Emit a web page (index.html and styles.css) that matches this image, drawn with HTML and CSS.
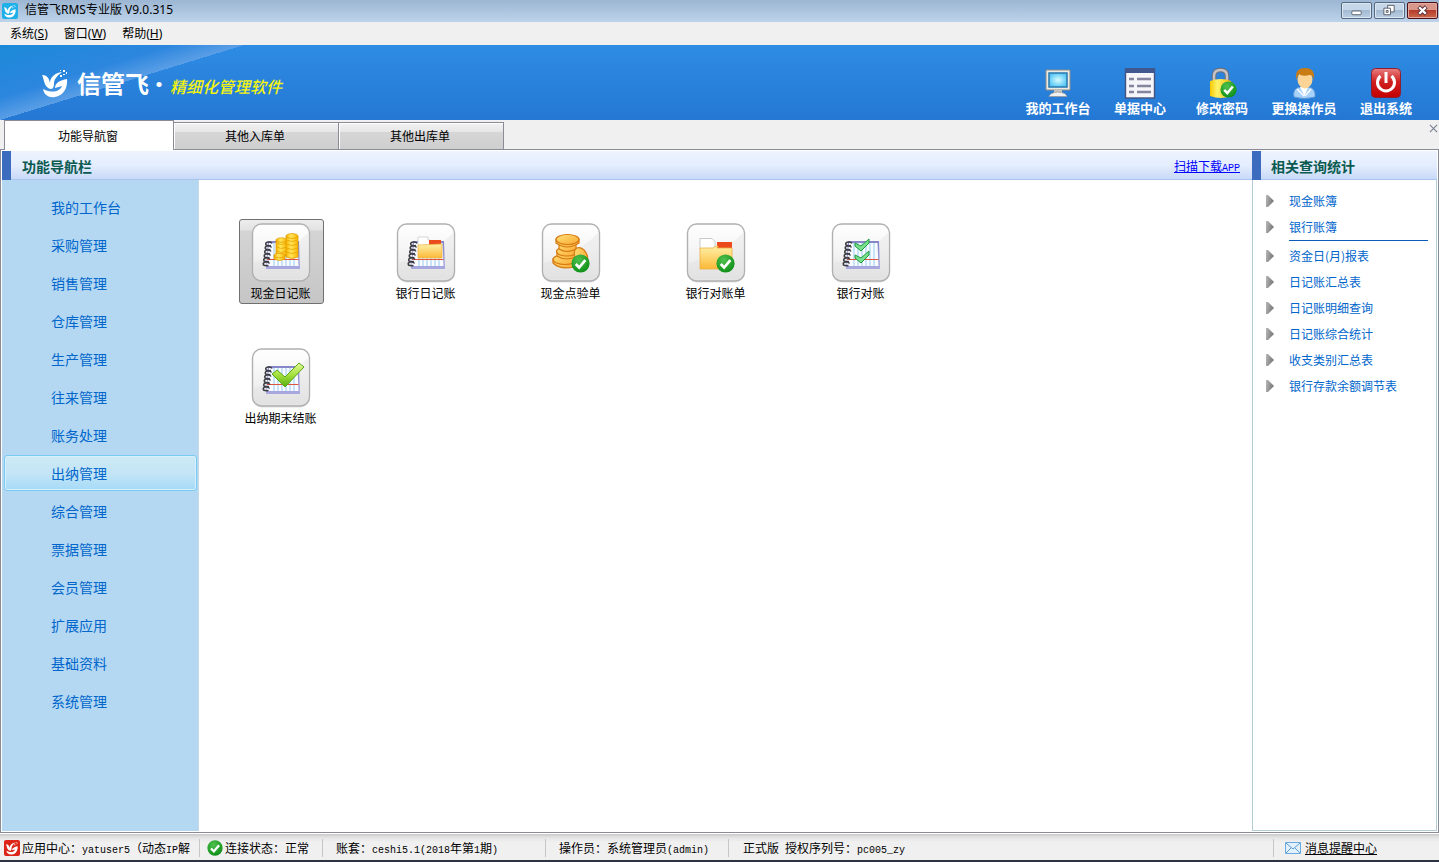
FILE: index.html
```html
<!DOCTYPE html>
<html lang="zh-CN">
<head>
<meta charset="utf-8">
<title>信管飞RMS专业版</title>
<link rel="stylesheet" href="styles.css">
</head>
<body>
<svg class="defs" width="0" height="0" aria-hidden="true">
  <defs>
    <linearGradient id="gTile" x1="0" y1="0" x2="0" y2="1"><stop offset="0" stop-color="#fff"/><stop offset=".45" stop-color="#f5f5f5"/><stop offset="1" stop-color="#e4e4e4"/></linearGradient>
    <linearGradient id="gBook" x1="0" y1="0" x2="0" y2="1"><stop offset="0" stop-color="#8585c8"/><stop offset="1" stop-color="#a9a9e0"/></linearGradient>
    <linearGradient id="gCoin" x1="0" y1="0" x2="1" y2="0"><stop offset="0" stop-color="#f8b400"/><stop offset=".4" stop-color="#ffe55a"/><stop offset="1" stop-color="#f9b600"/></linearGradient>
    <linearGradient id="gFolder" x1="0" y1="0" x2="0" y2="1"><stop offset="0" stop-color="#fff0a8"/><stop offset="1" stop-color="#fbb938"/></linearGradient>
    <linearGradient id="gCheck" x1="0" y1="0" x2="0" y2="1"><stop offset="0" stop-color="#e6fa9a"/><stop offset=".5" stop-color="#a4e03c"/><stop offset="1" stop-color="#55ad10"/></linearGradient>
    <linearGradient id="gOrange" x1="0" y1="0" x2="1" y2="1"><stop offset="0" stop-color="#ffe07a"/><stop offset="1" stop-color="#f9a830"/></linearGradient>
    <linearGradient id="gRed" x1="0" y1="0" x2="0" y2="1"><stop offset="0" stop-color="#e88080"/><stop offset=".45" stop-color="#d02020"/><stop offset="1" stop-color="#c40000"/></linearGradient>
    <linearGradient id="gLock" x1="0" y1="0" x2="1" y2="0"><stop offset="0" stop-color="#f5c800"/><stop offset=".35" stop-color="#fff36a"/><stop offset="1" stop-color="#f0b800"/></linearGradient>
    <radialGradient id="gGreen" cx=".4" cy=".3" r=".8"><stop offset="0" stop-color="#4fc04f"/><stop offset="1" stop-color="#078a10"/></radialGradient>
    <radialGradient id="gScreen"><stop offset="0" stop-color="#d8fbff"/><stop offset="1" stop-color="#5ccaf6"/></radialGradient>
    <symbol id="bird" viewBox="0 0 30 30">
      <path d="M2 7C7 7 9 10 10 15C10 9 15 5 22 4C17 8 14 11 14 16C14 22 10 22 7 19C4 16 4 11 2 7Z"/>
      <path d="M27 11C20 12 15 15 15 20L22 18C20 23 13 26 3 21C4 27 9 30 15 29C23 28 28 20 27 11Z"/>
      <path d="M20 7h2v2h-2zM23 2h2v2h-2zM23 6h2v1h-2zM26 4h1v2h-1zM20 2h1v1h-1z"/>
    </symbol>
    <symbol id="badge" viewBox="0 0 18 18">
      <circle cx="9" cy="9" r="8.600" fill="url(#gGreen)"/>
      <path d="M4.500 9.500L7.700 12.800L13.600 5.800" fill="none" stroke="#fff" stroke-width="2.600"/>
    </symbol>
    <symbol id="tile" viewBox="0 0 60 60">
      <rect x="1.500" y="2.500" width="57" height="57" rx="9" fill="#ccc" opacity=".6"/>
      <rect x="1.500" y="1" width="57" height="57" rx="9" fill="url(#gTile)" stroke="#b0b0b0" stroke-width="1.400"/>
      <path d="M3 40Q35 32 57 10V49Q57 56 50 56H10Q3 56 3 49Z" fill="#dcdcdc" opacity=".3"/>
    </symbol>
    <symbol id="book" viewBox="0 0 60 60">
      <path d="M17 18H48L49 46H15Z" fill="url(#gBook)"/>
      <path d="M18 20H46.500L47.500 43H16Z" fill="#f8fbff"/>
      <path d="M23 20V43M27 20V43M31 20V43M35 20V43M39 20V43M43 20V43" stroke="#b5d9f5" stroke-width="1.400"/>
      <path d="M16 36.500H47.500" stroke="#e0543c"/>
      <g fill="none" stroke="#3c3c44" stroke-width="1.500"><path d="M21 20.500q-1-2-4-1.500t-2 3q2 1 5 .5M20.500 24.500q-1-2-4-1.500t-2 3q2 1 5 .5M20 28.500q-1-2-4-1.500t-2 3q2 1 5 .5M19.500 32.500q-1-2-4-1.500t-2 3q2 1 5 .5M19 36.500q-1-2-4-1.500t-2 3q2 1 5 .5M18.500 40.500q-1-2-4-1.500t-2 3q2 1 5 .5"/></g>
    </symbol>
  </defs>
</svg>

<header class="titlebar">
  <svg class="app-icon" viewBox="0 0 16 16"><rect width="16" height="16" rx="2" fill="#1fb0ea"/><use href="#bird" x="1" y="1" width="14" height="14" fill="#fff"/></svg>
  <span class="app-name">信管飞RMS专业版 V9.0.315</span>
  <div class="win-buttons">
    <button class="win-btn" aria-label="最小化"><svg viewBox="0 0 30 16"><rect x="10" y="8.500" width="10" height="4" rx="1" fill="#fff" stroke="#555c68"/></svg></button>
    <button class="win-btn" aria-label="还原"><svg viewBox="0 0 30 16"><path d="M13 2.500h7v7h-7z" fill="#fff" stroke="#555c68"/><path d="M9 5.500h7v7h-7z" fill="#fff" stroke="#555c68"/><path d="M11.500 8h2v2h-2z" fill="none" stroke="#555c68"/></svg></button>
    <button class="win-btn win-close" aria-label="关闭"><svg viewBox="0 0 30 16"><path d="M11 4L19 12M19 4L11 12" stroke="#5b3038" stroke-width="4.500"/><path d="M11.500 4.500L18.500 11.500M18.500 4.500L11.500 11.500" stroke="#fff" stroke-width="2.500"/></svg></button>
  </div>
</header>

<nav class="menubar">
  <button class="menu">系统(<u>S</u>)</button>
  <button class="menu">窗口(<u>W</u>)</button>
  <button class="menu">帮助(<u>H</u>)</button>
</nav>

<section class="banner">
  <svg class="logo" viewBox="0 0 30 30"><use href="#bird" fill="#fff"/></svg>
  <span class="brand">信管飞</span><span class="dot">·</span><span class="slogan">精细化管理软件</span>
  <div class="tools">
    <button class="tool">
      <svg viewBox="0 0 32 32"><path d="M4 3h24v20H4z" fill="#ebebe6" stroke="#8c8c88"/><path d="M7 6h18v14H7z" fill="url(#gScreen)" stroke="#2878b0" stroke-width="1.500"/><path d="M12 23h8v3h-8z" fill="#c4c4c4"/><path d="M7 29.500Q8 25.500 16 25Q24 25.500 25 29.500Z" fill="#f0f0f0" stroke="#999" stroke-width=".8"/></svg>
      <span>我的工作台</span></button>
    <button class="tool">
      <svg viewBox="0 0 32 32"><rect x="1.500" y="2" width="29" height="29" fill="#f5f5fa" stroke="#44527c" stroke-width="1.400"/><path d="M1 1h30v5H1z" fill="#41578f"/><path d="M5 12h5M5 19h5M5 25h5M13 12h14M13 19h14M13 25h14" stroke="#85859f" stroke-width="2.500"/></svg>
      <span>单据中心</span></button>
    <button class="tool">
      <svg viewBox="0 0 32 32"><path d="M8 16V9Q8 3 14.500 3T21 9v7" fill="none" stroke="#6f6f75" stroke-width="4.500"/><path d="M8 16V9Q8 3 14.500 3T21 9v7" fill="none" stroke="#c4c4c8" stroke-width="2.500"/><path d="M4 14Q15 10 25 14V29Q15 33 4 29Z" fill="url(#gLock)"/><use href="#badge" x="14" y="14" width="17" height="17"/></svg>
      <span>修改密码</span></button>
    <button class="tool">
      <svg viewBox="0 0 32 32"><path d="M6 30Q4 21 13 20H20Q28 21 27 30Q16 33 6 30Z" fill="#a9d2fa" stroke="#5d94d0" stroke-width=".8"/><path d="M12 20L16.500 29L20 20Z" fill="#fff"/><path d="M16 29L9 22M17 29L23 22" stroke="#fff" stroke-width="1.200"/><ellipse cx="17" cy="12.500" rx="7.500" ry="9" fill="#fcd596"/><path d="M8.500 13Q6 1 17 1Q28 1 25.500 13Q25 8 22 8Q14 10 11 7Q9 10 8.500 13Z" fill="#c97c14"/></svg>
      <span>更换操作员</span></button>
    <button class="tool">
      <svg viewBox="0 0 32 32"><rect x="1.500" y="1.500" width="29" height="29" rx="4" fill="url(#gRed)" stroke="#8c2030"/><path d="M10.500 9A8.500 8.500 0 1 0 21.500 9" fill="none" stroke="#fff" stroke-width="3"/><path d="M16 5v11" stroke="#fff" stroke-width="3"/></svg>
      <span>退出系统</span></button>
  </div>
</section>

<div class="tabs" role="tablist">
  <button class="tab tab-active" role="tab" aria-selected="true">功能导航窗</button>
  <button class="tab" role="tab">其他入库单</button>
  <button class="tab" role="tab">其他出库单</button>
  <button class="tabs-close" aria-label="关闭标签"><svg viewBox="0 0 10 10"><path d="M1 1L9 9M9 1L1 9" stroke="#7c8494" stroke-width="1.300"/></svg></button>
</div>

<div class="workspace">
  <div class="content">
    <div class="panel-head">
      <h2>功能导航栏</h2>
      <a class="download" href="#app">扫描下载<span class="latin">APP</span></a>
    </div>
    <div class="content-body">
      <nav class="side">
        <a href="#m1">我的工作台</a>
        <a href="#m2">采购管理</a>
        <a href="#m3">销售管理</a>
        <a href="#m4">仓库管理</a>
        <a href="#m5">生产管理</a>
        <a href="#m6">往来管理</a>
        <a href="#m7">账务处理</a>
        <a href="#m8" class="current">出纳管理</a>
        <a href="#m9">综合管理</a>
        <a href="#m10">票据管理</a>
        <a href="#m11">会员管理</a>
        <a href="#m12">扩展应用</a>
        <a href="#m13">基础资料</a>
        <a href="#m14">系统管理</a>
      </nav>
      <main class="grid">
        <button class="fn fn-selected">
          <svg viewBox="0 0 60 60"><use href="#tile"/><use href="#book"/>
            <g fill="url(#gCoin)" stroke="#e09800" stroke-width=".7">
              <path d="M25 17v15q5.500 3 11 0V17z"/><ellipse cx="30.500" cy="17" rx="5.500" ry="2.200"/>
              <path d="M35 13v21q6 3 12 0V13z"/><ellipse cx="41" cy="13" rx="6" ry="2.400"/>
              <path d="M23 32v4q5.500 3 11 0v-4z"/><ellipse cx="28.500" cy="32.500" rx="5.500" ry="2.200"/>
            </g>
            <path d="M25 20q5.500 3 11 0M25 24q5.500 3 11 0M25 28q5.500 3 11 0M35 17q6 3 12 0M35 21q6 3 12 0M35 25q6 3 12 0M35 29q6 3 12 0" fill="none" stroke="#eba600" stroke-width=".8"/></svg>
          <span>现金日记账</span></button>
        <button class="fn">
          <svg viewBox="0 0 60 60"><use href="#tile"/><use href="#book"/>
            <path d="M22 14h10v3h2v6H22z" fill="#fff" stroke="#ccc" stroke-width=".8"/><path d="M33 17h12v5H33z" fill="#ea4a1c"/><path d="M22 22l24-1v14H22z" fill="url(#gFolder)" stroke="#f0b040" stroke-width=".7"/></svg>
          <span>银行日记账</span></button>
        <button class="fn">
          <svg viewBox="0 0 60 60"><use href="#tile"/>
            <g fill="url(#gOrange)" stroke="#d67a12" stroke-width="1.200">
              <path d="M12 36v4q7 7 21 4v-8z"/><ellipse cx="24" cy="36.500" rx="12" ry="5"/>
              <path d="M16 28v5q9 6 20 0v-5z"/><ellipse cx="26" cy="28.500" rx="10.500" ry="4.500"/>
              <path d="M18 21v5q8 5 17 0v-5z"/>
              <path d="M15 16v4q11 8 23 0v-4z"/><ellipse cx="26.500" cy="16.500" rx="11.500" ry="5"/>
              <ellipse cx="40" cy="33" rx="6" ry="9" transform="rotate(-28 40 33)"/>
            </g><use href="#badge" x="30" y="31" width="19" height="19"/></svg>
          <span>现金点验单</span></button>
        <button class="fn">
          <svg viewBox="0 0 60 60"><use href="#tile"/>
            <path d="M14 15.500h12l3 3v8H14z" fill="#fff" stroke="#bbb" stroke-width=".8"/><path d="M31 19h15v6H31z" fill="#ea4a1c"/><path d="M14 25h13l3-2h2l-1 2h15v21H14z" fill="url(#gFolder)" stroke="#eeb048" stroke-width=".8"/><use href="#badge" x="30" y="31" width="19" height="19"/></svg>
          <span>银行对账单</span></button>
        <button class="fn">
          <svg viewBox="0 0 60 60"><use href="#tile"/><use href="#book"/>
            <g fill="#7be08e" stroke="#1b9a3c" stroke-width="1"><path d="M24 20l6 3l8-7v4l-8 8l-6-5z"/><path d="M24 32l6 3l8-7v4l-8 8l-6-5z"/></g></svg>
          <span>银行对账</span></button>
        <button class="fn">
          <svg viewBox="0 0 60 60"><use href="#tile"/><use href="#book"/>
            <path d="M21 26l5-4l8 7l14-14l5 4l-19 20z" fill="url(#gCheck)" stroke="#58a816" stroke-width="1"/></svg>
          <span>出纳期末结账</span></button>
      </main>
    </div>
  </div>

  <aside class="related">
    <div class="panel-head"><h2>相关查询统计</h2></div>
    <ul class="links">
      <li><a href="#r1">现金账簿</a></li>
      <li class="group-end"><a href="#r2">银行账簿</a></li>
      <li><a href="#r3">资金日(月)报表</a></li>
      <li><a href="#r4">日记账汇总表</a></li>
      <li><a href="#r5">日记账明细查询</a></li>
      <li><a href="#r6">日记账综合统计</a></li>
      <li><a href="#r7">收支类别汇总表</a></li>
      <li><a href="#r8">银行存款余额调节表</a></li>
    </ul>
  </aside>
</div>

<footer class="status">
  <div class="cell cell-app"><svg viewBox="0 0 16 16"><rect width="16" height="16" rx="2" fill="#dc2418"/><use href="#bird" x="1" y="1" width="14" height="14" fill="#fff"/></svg><span>应用中心：<span class="latin">yatuser5</span>（动态<span class="latin">IP</span>解</span></div>
  <div class="cell cell-link"><svg viewBox="0 0 18 18"><use href="#badge"/></svg><span>连接状态：正常</span></div>
  <div class="cell cell-book"><span>账套：<span class="latin">ceshi5.1(2018</span>年第<span class="latin">1</span>期<span class="latin">)</span></span></div>
  <div class="cell cell-user"><span>操作员：系统管理员<span class="latin">(admin)</span></span></div>
  <div class="cell cell-license"><span>正式版<span class="latin">&nbsp;</span>授权序列号：<span class="latin">pc005_zy</span></span></div>
  <div class="cell cell-msg"><svg viewBox="0 0 16 16"><path d="M.5 2.500h15v11H.5z" fill="#e2f1fd" stroke="#6aa8e0"/><path d="M1 3l7 6l7-6M1 13l5-5M15 13l-5-5" fill="none" stroke="#5c9cdc"/></svg><a href="#msg">消息提醒中心</a></div>
</footer>
</body>
</html>
```
FILE: styles.css
```css
* { box-sizing: border-box; }

body {
  margin: 0;
  min-height: 100vh;
  display: flex;
  flex-direction: column;
  background: #f0f0f0;
  color: #000;
  font: 12px/16px "Noto Sans CJK SC", sans-serif;
}

button {
  margin: 0;
  padding: 0;
  border: 0;
  background: none;
  color: inherit;
  font: inherit;
}

svg { display: block; flex: none; }
.defs { position: absolute; }

.latin { font: 10px/10px "Liberation Mono", monospace; }

/* window title */
.titlebar {
  display: flex;
  align-items: center;
  height: 22px;
  padding-left: 2px;
  background: linear-gradient(#9cb6d3, #bdd3ea);
}
.app-icon { width: 16px; height: 16px; margin-right: 7px; }
.app-name { flex: 1; padding-bottom: 2px; font-family: "Noto Sans", "Noto Sans CJK SC", sans-serif; }
.win-buttons { display: flex; gap: 2px; padding: 0 1px 1px 0; }
.win-btn {
  width: 31px;
  height: 17px;
  border: 1px solid #56687f;
  border-radius: 2px;
  box-shadow: inset 0 0 0 1px #dbe7f3;
  background: linear-gradient(#c5d6e8 50%, #a3bad2 50%, #bcd0e4);
}
.win-btn svg { width: 29px; height: 15px; }
.win-close {
  border-color: #4d1017;
  box-shadow: inset 0 0 0 1px #e3aaa0;
  background: linear-gradient(#d9968a 50%, #b73c2c 50%, #cb6a4c);
}

/* menu bar */
.menubar {
  display: flex;
  align-items: center;
  gap: 16px;
  height: 23px;
  padding-left: 10px;
  font-family: "Noto Sans", "Noto Sans CJK SC", sans-serif;
}

/* banner */
.banner {
  display: flex;
  align-items: center;
  height: 75px;
  padding: 0 12px 0 40px;
  color: #fff;
  background:
    linear-gradient(to bottom right, #1c8ad8, #2c86de 35%, #5a9ee6 50%, transparent 50%) 0 0 / 244px 75px no-repeat,
    linear-gradient(#2e8ce4, #2478d4);
}
.logo { width: 30px; height: 30px; }
.brand { margin: 1px 0 0 7px; font-size: 24px; line-height: 32px; font-weight: 700; }
.dot { width: 20px; padding-top: 2px; text-align: center; font-size: 20px; font-weight: 700; }
.slogan { margin: 6px 0 0 1px; font-size: 16px; line-height: 24px; font-weight: 500; font-style: italic; color: #f4f410; }
.tools { display: flex; margin-left: auto; padding-top: 18px; }
.tool {
  display: flex;
  flex-direction: column;
  align-items: center;
  gap: 1px;
  width: 82px;
  font-size: 13px;
  font-weight: 700;
}
.tool svg { width: 32px; height: 32px; }

/* document tabs */
.tabs {
  display: flex;
  align-items: flex-end;
  height: 30px;
  padding: 0 1px 0 4px;
  box-shadow: inset 0 -1px #8b8b97;
}
.tab {
  width: 166px;
  height: 28px;
  margin-left: -1px;
  padding-right: 2px;
  border: 1px solid #8b8b97;
  box-shadow: inset 1px 1px #fff;
  background: linear-gradient(#f2f2f2, #e6e6e6 36%, #d6d6d6 36%, #cecece);
}
.tab-active {
  width: 170px;
  height: 30px;
  margin-left: 0;
  border-bottom: 0;
  background: #fff;
}
.tabs-close { align-self: flex-start; margin: 4px 0 0 auto; }
.tabs-close svg { width: 9px; height: 9px; }

/* workspace */
.workspace {
  flex: 1;
  display: flex;
  padding: 1px;
  border: solid #8b8b97;
  border-width: 0 1px 1px;
  background: #fff;
}
.content { flex: 1; min-width: 0; display: flex; flex-direction: column; }
.panel-head {
  display: flex;
  align-items: center;
  justify-content: space-between;
  height: 29px;
  padding: 0 12px 0 11px;
  border-left: 9px solid #3c6cbe;
  box-shadow: inset 0 -1px #aac4f0;
  background: linear-gradient(#eef3fe, #e4edfd 50%, #c6d8f8);
}
.panel-head h2 { margin: 0; font-size: 14px; line-height: 20px; font-weight: 700; color: #0a5a50; }
.download { color: #00f; }
.content-body { flex: 1; display: flex; }

.side {
  width: 197px;
  padding: 9px 1px 10px 2px;
  border-right: 1px solid #c4d8e6;
  background: #b4d8f2;
}
.side a {
  display: block;
  height: 36px;
  margin-bottom: 2px;
  padding-left: 46px;
  border: 1px solid transparent;
  border-radius: 3px;
  color: #0066cc;
  font-size: 14px;
  line-height: 34px;
  text-decoration: none;
}
.side .current {
  border-color: #7acbf2;
  box-shadow: inset 0 0 0 1px #d6effa;
  background: linear-gradient(#cde9f5, #c4e5f6 50%, #a6daf8);
}

.grid {
  flex: 1;
  display: grid;
  grid-template-columns: repeat(5, 85px);
  align-content: start;
  gap: 40px 60px;
  padding: 39px 40px;
}
.fn {
  display: flex;
  flex-direction: column;
  align-items: center;
  height: 85px;
  padding: 3px 2px 0 0;
  border: 1px solid transparent;
  border-radius: 3px;
  white-space: nowrap;
}
.fn svg { width: 60px; height: 60px; margin-bottom: 2px; }
.fn-selected {
  border-color: #707070;
  background: linear-gradient(#ededed, #e2e2e2 10px, #d4d4d4 11px, #c6c6c6);
}

.related { width: 185px; display: flex; flex-direction: column; }
.related .panel-head { padding-left: 10px; }
.links {
  flex: 1;
  margin: 0;
  padding: 8px 8px 0 13px;
  border: 1px solid #b4ccd8;
  border-top: 0;
  list-style: none;
}
.links li { display: flex; align-items: center; height: 26px; }
.links li::before {
  content: "";
  width: 8px;
  height: 12px;
  margin-right: 15px;
  background: linear-gradient(100deg, #b8b8b8, #6a6a6a);
  clip-path: polygon(0 0, 25% 0, 100% 50%, 25% 100%, 0 100%);
}
.links a { flex: 1; line-height: 24px; color: #0066cc; text-decoration: none; }
.links .group-end { height: 29px; align-items: flex-start; }
.links .group-end::before { margin-top: 7px; }
.links .group-end a { padding: 1px 0; border-bottom: 1px solid #0a5cb8; }

/* status bar */
.status {
  display: flex;
  align-items: center;
  height: 29px;
  padding-top: 1px;
  border-top: 1px solid #fff;
  border-bottom: 2px solid #2c3442;
  background: linear-gradient(#c8c8c8, #e2e2e2 3px, #f0f0f0 8px);
}
.cell {
  display: flex;
  align-items: center;
  height: 18px;
  border-right: 1px solid #c6c6c6;
  white-space: nowrap;
}
.cell svg { width: 16px; height: 16px; margin-right: 2px; }
.cell-app { width: 200px; padding: 0 6px 0 4px; }
.cell-link { width: 123px; padding-left: 7px; }
.cell-book { width: 223px; padding-left: 13px; }
.cell-user { width: 183px; padding-left: 13px; }
.cell-license { flex: 1; padding-left: 14px; }
.cell-msg { width: 165px; padding-left: 11px; border-right: 0; }
.cell-msg svg { margin-right: 4px; }
.cell-msg a { color: #000; }
```
